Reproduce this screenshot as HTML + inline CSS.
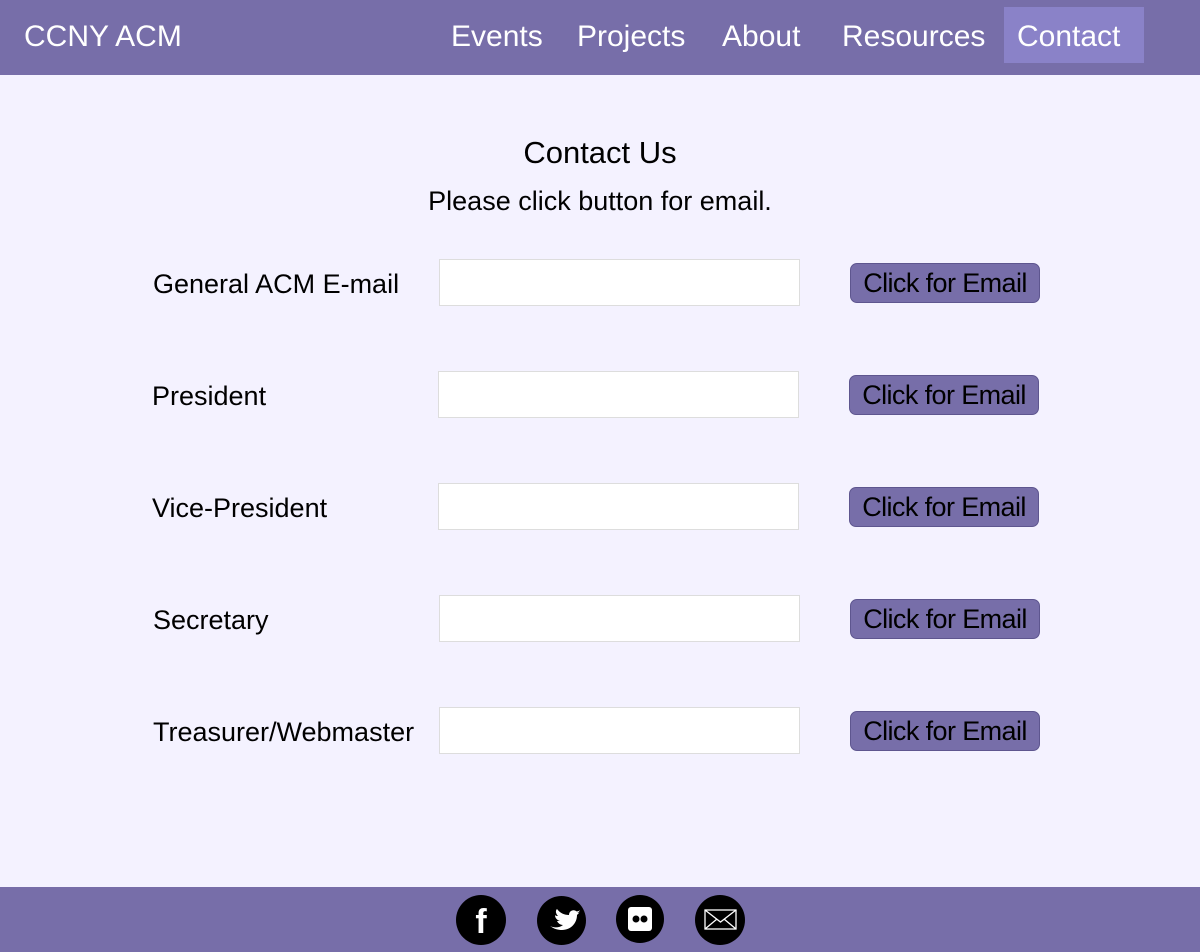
<!DOCTYPE html>
<html><head><style>
*{margin:0;padding:0;box-sizing:border-box}
body{width:1200px;height:952px;background:#f4f2ff;font-family:"Liberation Sans",sans-serif;position:relative;overflow:hidden;color:#000}
.nav{position:absolute;left:0;top:0;width:1200px;height:75px;background:#776ea9}
.nav a{position:absolute;color:#fff;font-size:30px;top:20px;text-decoration:none}
.act{position:absolute;left:1004px;top:7px;width:140px;height:56px;background:#8a82c8}
.t{position:absolute;left:0;width:1200px;text-align:center}
.lbl{position:absolute;left:153px;font-size:27px}
.in{position:absolute;left:439px;width:361px;height:47px;background:#fff;border:1px solid #ddd}
.btn{position:absolute;left:850px;width:190px;height:40px;background:#776ea9;border:1px solid #5e568f;border-radius:7px;font-size:27px;text-align:center;line-height:38px;letter-spacing:-0.6px}
.foot{position:absolute;left:0;top:887px;width:1200px;height:65px;background:#776ea9}
.ic{position:absolute;top:896px;width:50px;height:50px;border-radius:50%;background:#000}
</style></head><body>
<div class="nav">
<div class="act"></div>
<a style="left:24px">CCNY ACM</a>
<a style="left:451px">Events</a>
<a style="left:577px">Projects</a>
<a style="left:722px">About</a>
<a style="left:842px">Resources</a>
<a style="left:1017px">Contact</a>
</div>
<div class="t" style="top:135px;font-size:31px">Contact Us</div>
<div class="t" style="top:186px;font-size:27px">Please click button for email.</div>

<div class="lbl" style="top:269px">General ACM E-mail</div><div class="in" style="top:259px"></div><div class="btn" style="top:263px">Click for Email</div>
<div class="lbl" style="top:381px;left:152px">President</div><div class="in" style="top:371px;left:438px"></div><div class="btn" style="top:375px;left:849px">Click for Email</div>
<div class="lbl" style="top:493px;left:152px">Vice-President</div><div class="in" style="top:483px;left:438px"></div><div class="btn" style="top:487px;left:849px">Click for Email</div>
<div class="lbl" style="top:605px">Secretary</div><div class="in" style="top:595px"></div><div class="btn" style="top:599px">Click for Email</div>
<div class="lbl" style="top:717px">Treasurer/Webmaster</div><div class="in" style="top:707px"></div><div class="btn" style="top:711px">Click for Email</div>

<div class="foot"></div>
<div class="ic" style="left:456px;top:895px"><svg width="50" height="50"><text x="25" y="38" fill="#fff" font-size="34" font-weight="bold" text-anchor="middle" font-family="Liberation Sans">f</text></svg></div>
<div class="ic" style="left:537px;top:896px;width:49px;height:49px"><svg width="49" height="49"><path d="M13 30c4 2 9 2 13-1-3 0-5-2-6-4h3c-3-1-5-3-5-6 1 1 2 1 3 1-2-2-3-5-1-7 3 4 7 6 12 6 0-4 4-6 7-4 1 1 3 0 4-1-1 2-2 3-3 3 1 0 2 0 3-1-1 1-2 2-3 3 0 8-6 15-15 15-4 0-8-1-12-4z" fill="#fff"/></svg></div>
<div class="ic" style="left:616px;top:895px;width:48px;height:48px"><svg width="48" height="48"><rect x="12" y="12" width="24" height="24" rx="3" fill="#fff"/><circle cx="20" cy="24" r="3.5" fill="#000"/><circle cx="28" cy="24" r="3.5" fill="#000"/></svg></div>
<div class="ic" style="left:695px;top:895px"><svg width="50" height="50"><rect x="10" y="15" width="31" height="19" fill="none" stroke="#fff" stroke-width="1.3"/><path d="M10 15l15.5 12L41 15M10 34l12-10M41 34l-12-10" fill="none" stroke="#fff" stroke-width="1.3"/></svg></div>
</body></html>
